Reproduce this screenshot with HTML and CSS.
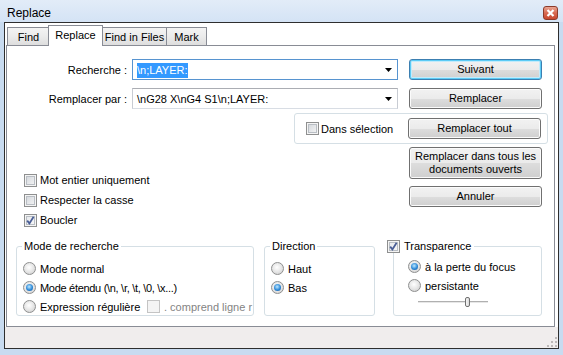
FILE: index.html
```html
<!DOCTYPE html>
<html lang="fr">
<head>
    <meta charset="UTF-8">
    <title>Replace</title>
    <link rel="stylesheet" href="styles.css">
</head>
<body>
    <div class="titlebar">
        <span class="title">Replace</span>
        <span class="close">
            <svg width="9" height="8" viewBox="0 0 9 8"><path d="M1.5 1 L7.5 7 M7.5 1 L1.5 7" stroke="#fff" stroke-width="2.2"/></svg>
        </span>
    </div>

    <div class="client">
        <!-- Tabs -->
        <div class="tabs">
            <div class="tab tab-find">Find</div>
            <div class="tab tab-replace active">Replace</div>
            <div class="tab tab-files">Find in Files</div>
            <div class="tab tab-mark">Mark</div>
        </div>

        <div class="panel">
            <!-- Search / replace fields -->
            <div class="row">
                <span class="label">Recherche :</span>
                <div class="combo focus">
                    <span class="value"><span class="selected">\n;LAYER:</span></span>
                    <svg class="arrow" width="7" height="4" viewBox="0 0 7 4"><path d="M0 0 H7 L3.5 4 Z" fill="#000"/></svg>
                </div>
                <div class="btn default">Suivant</div>
            </div>
            <div class="row">
                <span class="label">Remplacer par :</span>
                <div class="combo">
                    <span class="value">\nG28 X\nG4 S1\n;LAYER:</span>
                    <svg class="arrow" width="7" height="4" viewBox="0 0 7 4"><path d="M0 0 H7 L3.5 4 Z" fill="#000"/></svg>
                </div>
                <div class="btn">Remplacer</div>
            </div>

            <div class="selgroup">
                <label class="check"><span class="box"></span>Dans sélection</label>
                <div class="btn">Remplacer tout</div>
            </div>

            <div class="middle">
                <div class="options">
                    <label class="check opt"><span class="box"></span>Mot entier uniquement</label>
                    <label class="check opt"><span class="box"></span>Respecter la casse</label>
                    <label class="check opt"><span class="box checked"><svg width="11" height="11" viewBox="0 0 11 11"><path d="M2.2 5.6 L4.4 8.4 L8.6 1.8" fill="none" stroke="#4a5e96" stroke-width="1.8"/></svg></span>Boucler</label>
                </div>
                <div class="buttons">
                    <div class="btn tall">Remplacer dans tous les<br>documents ouverts</div>
                    <div class="btn">Annuler</div>
                </div>
            </div>

            <!-- Option groups -->
            <div class="groups">
                <div class="group mode">
                    <div class="group-title">Mode de recherche</div>
                    <div class="group-body">
                        <label class="radio-row"><span class="radio"></span>Mode normal</label>
                        <label class="radio-row"><span class="radio on"><span class="dot"></span></span><span class="tight">Mode étendu (\n, \r, \t, \0, \x...)</span></label>
                        <div class="radio-row">
                            <label class="regex"><span class="radio"></span>Expression régulière</label>
                            <span class="check disabled"><span class="box"></span>. comprend ligne r</span>
                        </div>
                    </div>
                </div>

                <div class="group direction">
                    <div class="group-title">Direction</div>
                    <div class="group-body">
                        <label class="radio-row"><span class="radio"></span>Haut</label>
                        <label class="radio-row"><span class="radio on"><span class="dot"></span></span>Bas</label>
                    </div>
                </div>

                <div class="group transp">
                    <label class="group-title check"><span class="box checked"><svg width="11" height="11" viewBox="0 0 11 11"><path d="M2.2 5.6 L4.4 8.4 L8.6 1.8" fill="none" stroke="#4a5e96" stroke-width="1.8"/></svg></span>Transparence</label>
                    <div class="group-body">
                        <label class="radio-row"><span class="radio on"><span class="dot"></span></span>à la perte du focus</label>
                        <label class="radio-row"><span class="radio"></span>persistante</label>
                        <div class="slider"><span class="thumb"></span></div>
                    </div>
                </div>
            </div>
        </div>

        <div class="statusbar">
            <svg class="grip" width="11" height="10" viewBox="0 0 11 10">
                <rect x="8" y="0" width="2" height="2" fill="#bcb8b8"/>
                <rect x="4" y="4" width="2" height="2" fill="#bcb8b8"/>
                <rect x="8" y="4" width="2" height="2" fill="#bcb8b8"/>
                <rect x="0" y="8" width="2" height="2" fill="#bcb8b8"/>
                <rect x="4" y="8" width="2" height="2" fill="#bcb8b8"/>
                <rect x="8" y="8" width="2" height="2" fill="#bcb8b8"/>
            </svg>
        </div>
    </div>
</body>
</html>
```

FILE: styles.css
```css
body {
    margin: 0;
    width: 563px;
    height: 355px;
    overflow: hidden;
    font-family: "Liberation Sans", Arial, sans-serif;
    font-size: 11px;
    color: #000;
    background-color: #c8dbf0;
}

/* Title bar */
.titlebar {
    height: 22px;
    box-sizing: border-box;
    padding: 4px 5px 0 7px;
    display: flex;
    align-items: center;
    background: linear-gradient(#e2ecf8, #d4e3f5);
}

.title {
    flex: 1;
    font-size: 12px;
}

.close {
    width: 15px;
    height: 14px;
    box-sizing: border-box;
    border: 1px solid #8b3b2b;
    border-radius: 3px;
    background: linear-gradient(#eaa592, #d86a52 50%, #c8472e);
    display: flex;
    align-items: center;
    justify-content: center;
}

/* Client area */
.client {
    margin: 0 4px;
    height: 327px;
    box-sizing: border-box;
    border: 1px solid #2e2e2e;
    background-color: #fff;
    display: flex;
    flex-direction: column;
}

.tabs {
    height: 22px;
    flex-shrink: 0;
    padding-left: 2px;
    display: flex;
    align-items: flex-end;
    position: relative;
    z-index: 1;
}

.tab {
    height: 18px;
    box-sizing: border-box;
    margin-left: -1px;
    border: 1px solid #898c95;
    border-bottom: none;
    background: linear-gradient(#f4f4f4, #ebebeb 50%, #dedede);
    display: flex;
    align-items: center;
    justify-content: center;
    white-space: nowrap;
}

.tab-find { width: 43px; margin-left: 0; }
.tab-replace { width: 55px; }
.tab-files { width: 65px; }
.tab-mark { width: 41px; }

.tab.active {
    height: 21px;
    margin-left: -2px;
    margin-bottom: -1px;
    padding-bottom: 2px;
    background: #fff;
}

.panel {
    flex: 1;
    margin: 0 3px 0 1px;
    padding-top: 13px;
    box-sizing: border-box;
    border: 1px solid #898c95;
}

.statusbar {
    height: 21px;
    flex-shrink: 0;
    background-color: #f0eded;
    display: flex;
    justify-content: flex-end;
    align-items: flex-end;
}

.grip {
    margin: 0 0 1px 0;
}

/* Rows with fields */
.row {
    height: 21px;
    display: flex;
    align-items: center;
}

.row + .row {
    margin-top: 8px;
}

.label {
    width: 120px;
    margin-right: 5px;
    text-align: right;
}

.combo {
    width: 266px;
    height: 21px;
    box-sizing: border-box;
    margin-right: 11px;
    padding: 0 5px 0 4px;
    border: 1px solid #abadb3;
    border-color: #abadb3 #c8ccd3 #d8dde4;
    display: flex;
    align-items: center;
    white-space: nowrap;
}

.combo.focus {
    border-color: #5794d0;
}

.combo .value {
    flex: 1;
}

.selected {
    background-color: #3399ff;
    color: #fff;
    padding: 1px 0 2px;
}

.btn {
    width: 133px;
    height: 21px;
    box-sizing: border-box;
    border: 1px solid #707070;
    border-radius: 3px;
    background: linear-gradient(#f2f2f2, #ebebeb 50%, #dddddd 51%, #cfcfcf);
    box-shadow: inset 0 0 0 1px #fbfbfb;
    display: flex;
    align-items: center;
    justify-content: center;
    text-align: center;
    line-height: 13px;
}

.btn.default {
    border-color: #3c7fb1;
    box-shadow: inset 0 0 0 1px #5ccbf5, inset 0 0 0 2px #c2ebfb;
}

.btn.tall {
    height: 32px;
}

/* Checkboxes */
.check {
    display: flex;
    align-items: center;
    gap: 3px;
    white-space: nowrap;
}

.box {
    width: 13px;
    height: 13px;
    box-sizing: border-box;
    border: 1px solid #8e8f8f;
    background: linear-gradient(135deg, #cfd3d8, #f8f8f8);
    box-shadow: inset 0 0 0 1px #f4f4f4, inset 0 0 0 2px #b9bec4;
    display: flex;
    align-items: center;
    justify-content: center;
    flex-shrink: 0;
}

.box.checked {
    background: linear-gradient(135deg, #e3e6ea, #fafafa);
}

.check.disabled {
    color: #838383;
    gap: 4px;
}

.check.disabled .box {
    border-color: #c4c4c4;
    background: #f4f4f4;
    box-shadow: none;
}

.selgroup {
    width: 254px;
    height: 31px;
    box-sizing: border-box;
    margin: 4px 0 0 287px;
    padding: 0 6px 0 11px;
    border: 1px solid #d5dfe5;
    border-radius: 3px;
    display: flex;
    align-items: center;
}

.selgroup .check {
    gap: 2px;
}

.selgroup .btn {
    margin-left: auto;
}

.middle {
    display: flex;
    margin-top: 3px;
}

.options {
    margin-left: 17px;
    padding-top: 23px;
}

.opt {
    height: 20px;
}

.buttons {
    margin-left: auto;
    margin-right: 12px;
    display: flex;
    flex-direction: column;
    gap: 7px;
}

/* Group boxes */
.groups {
    display: flex;
    align-items: flex-start;
    margin-top: 16px;
}

.group {
    height: 70px;
    box-sizing: border-box;
    border: 1px solid #d5dfe5;
    border-radius: 3px;
}

.group-title {
    width: fit-content;
    height: 13px;
    margin: -7px 0 0 5px;
    padding: 0 2px;
    line-height: 13px;
    background-color: #fff;
}

.group-body {
    margin-top: 6px;
    padding-left: 6px;
}

.mode {
    width: 238px;
    margin-left: 9px;
}

.tight {
    letter-spacing: -0.3px;
}

.direction {
    width: 111px;
    margin-left: 10px;
}

.transp {
    width: 149px;
    margin-left: 18px;
}

.transp .group-title {
    margin-left: -7px;
    padding: 0 3px 0 0;
    gap: 4px;
}

.transp .group-body {
    margin-top: 4px;
    padding-left: 14px;
}

.radio-row {
    height: 19px;
    display: flex;
    align-items: center;
    white-space: nowrap;
}

.radio-row .radio,
.regex .radio {
    margin-right: 4px;
}

.regex {
    width: 124px;
    display: flex;
    align-items: center;
}

.radio {
    width: 13px;
    height: 13px;
    box-sizing: border-box;
    border: 1px solid #8e8f8f;
    border-radius: 50%;
    background: radial-gradient(circle at 45% 40%, #ffffff, #e6e6e6 50%, #c9c9c9);
    display: flex;
    align-items: center;
    justify-content: center;
    flex-shrink: 0;
}

.dot {
    width: 7px;
    height: 7px;
    border-radius: 50%;
    background: radial-gradient(circle at 45% 40%, #bfe9ff, #2e8ad8 55%, #124f93);
}

.slider {
    width: 70px;
    height: 10px;
    margin: 2px 0 0 10px;
    display: flex;
    background: linear-gradient(transparent 4px, #b0b0b0 4px, #b0b0b0 5px, #e7e7e7 5px, #e7e7e7 6px, transparent 6px);
}

.thumb {
    width: 5px;
    height: 10px;
    box-sizing: border-box;
    margin-left: 47px;
    border: 1px solid #707070;
    border-radius: 2px;
    background: linear-gradient(90deg, #f6f6f6, #dadada);
}
```
